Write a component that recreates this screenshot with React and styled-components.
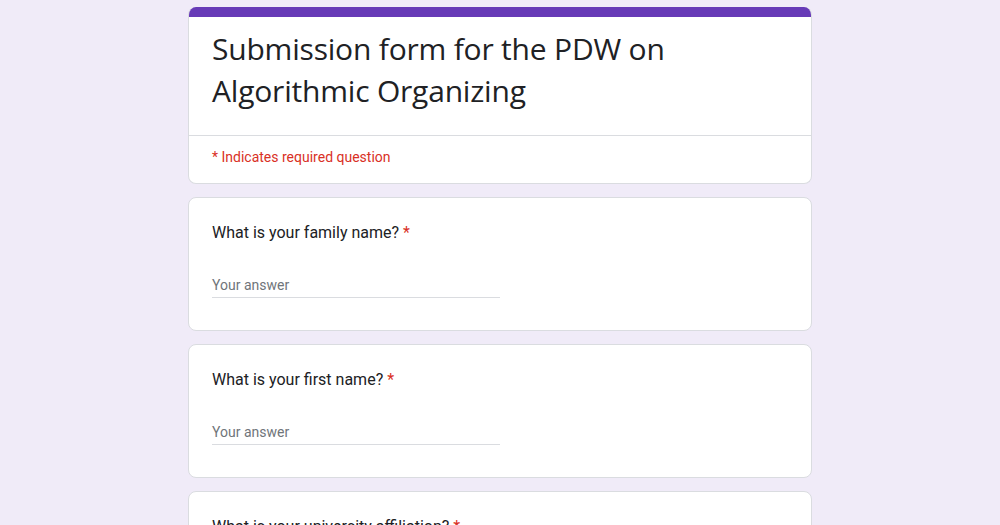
import React from "react";
import styled, { createGlobalStyle } from "styled-components";

const Global = createGlobalStyle`
  html, body {
    margin: 0;
    padding: 0;
    background: #f0ebf8;
    overflow: hidden;
  }
  body {
    font-family: Roboto, "Liberation Sans", sans-serif;
  }
`;

const Page = styled("div")`
  display: flex;
  flex-direction: column;
  align-items: center;
  gap: 13px;
  padding-top: 7px;
  height: 525px;
  box-sizing: border-box;
`;

const Card = styled("div")`
  width: 624px;
  box-sizing: border-box;
  background: #fff;
  border: 1px solid #dadce0;
  border-radius: 8px;
  overflow: hidden;
  flex-shrink: 0;
`;

const HeaderCard = styled(Card)`
  border-top: none;
`;

const Accent = styled("div")`
  height: 10px;
  background: #673ab7;
`;

const Title = styled("h1")`
  margin: 0;
  padding: 11px 23px 23px;
  font-family: "Open Sans", Roboto, sans-serif;
  font-weight: 400;
  font-size: 30px;
  line-height: 42px;
  color: #202124;
  letter-spacing: -0.2px;
  border-bottom: 1px solid #dadce0;
`;

const Required = styled("div")`
  padding: 11px 23px 16px;
  font-size: 14px;
  line-height: 20px;
  color: #d93025;
`;

const Question = styled(Card)`
  padding: 23px 23px 32px;
`;

const Label = styled("div")`
  font-size: 16px;
  line-height: 24px;
  color: #202124;
  margin-bottom: 28px;
`;

const Star = styled("span")`
  color: #d93025;
  margin-left: 4px;
`;

const Answer = styled("div")`
  width: 288px;
  height: 24px;
  border-bottom: 1px solid #dadce0;
  font-size: 14px;
  line-height: 24px;
  color: #70757a;
`;

const questions = [
  "What is your family name?",
  "What is your first name?",
  "What is your university affiliation?",
];

export default function App() {
  return (
    <>
      <Global />
      <Page>
        <HeaderCard>
          <Accent />
          <Title>
            Submission form for the PDW on
            <br />
            Algorithmic Organizing
          </Title>
          <Required>* Indicates required question</Required>
        </HeaderCard>
        {questions.map((q) => (
          <Question key={q}>
            <Label>
              {q}
              <Star>*</Star>
            </Label>
            <Answer>Your answer</Answer>
          </Question>
        ))}
      </Page>
    </>
  );
}
